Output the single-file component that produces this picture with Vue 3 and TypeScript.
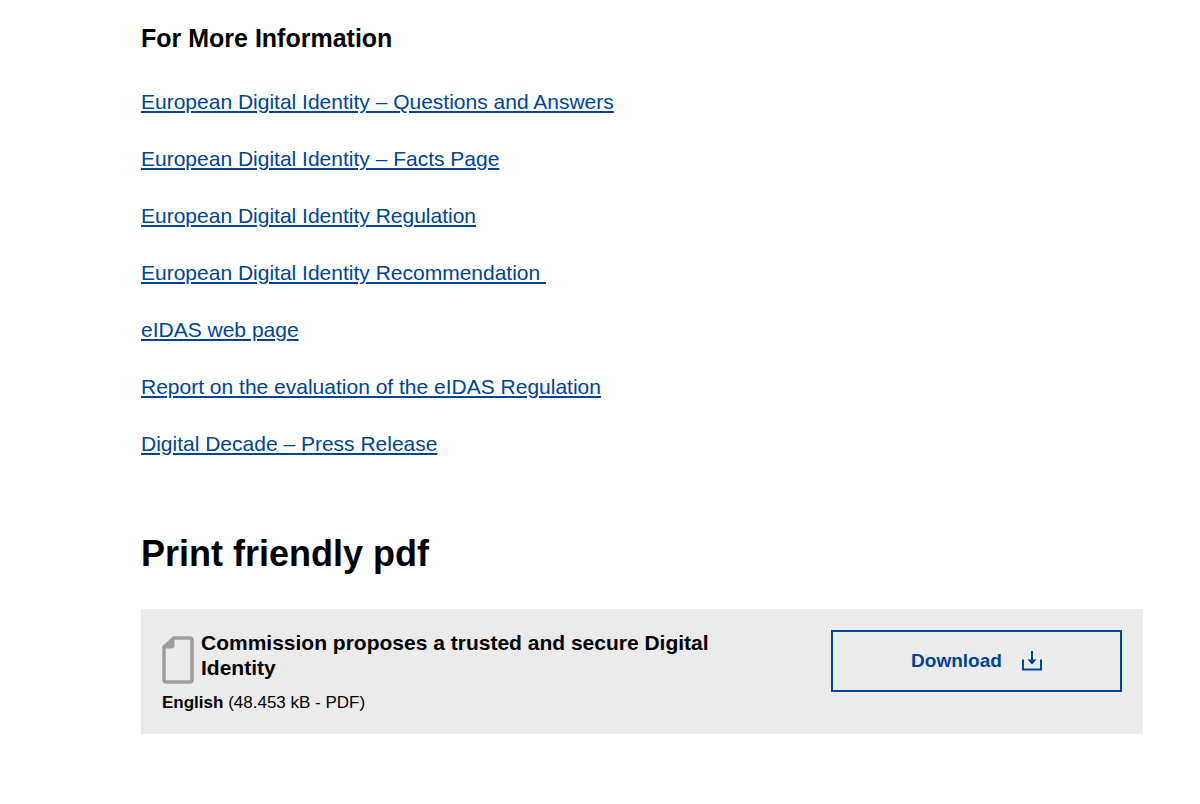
<script setup lang="ts">
interface InfoLink {
  label: string
}

const links: InfoLink[] = [
  { label: 'European Digital Identity – Questions and Answers' },
  { label: 'European Digital Identity – Facts Page' },
  { label: 'European Digital Identity Regulation' },
  { label: 'European Digital Identity Recommendation\u00a0' },
  { label: 'eIDAS web page' },
  { label: 'Report on the evaluation of the eIDAS Regulation' },
  { label: 'Digital Decade – Press Release' },
]
</script>

<template>
  <main class="page">
    <section>
      <h3 class="info-title">For More Information</h3>
      <p v-for="link in links" :key="link.label" class="info-item">
        <a href="#" class="info-link">{{ link.label }}</a>
      </p>
    </section>

    <section class="print">
      <h2 class="print-title">Print friendly pdf</h2>
      <article class="file">
        <div class="file-details">
          <div class="file-heading">
            <svg class="file-icon" viewBox="0 0 32 48" aria-hidden="true">
              <path d="M12 2H27.5Q30 2 30 4.500V43.500Q30 46 27.500 46H4.500Q2 46 2 43.500V11Z" fill="none" stroke="#9d9d9d" stroke-width="3.500" />
              <path d="M10 2H12.500V9.500Q12.500 12.500 9.500 12.500H2V10Z" fill="#9d9d9d" />
            </svg>
            <h3 class="file-title">Commission proposes a trusted and secure Digital Identity</h3>
          </div>
          <p class="file-meta"><strong>English</strong> (48.453 kB - PDF)</p>
        </div>
        <a href="#" class="download">
          <span>Download</span>
          <svg class="download-icon" viewBox="0 0 20 20" aria-hidden="true">
            <path d="M1 8.500V18.500H19V8.500" fill="none" stroke="#004494" stroke-width="2" />
            <path d="M9 0H11V8.500H14.500L10 13.500L5.500 8.500H9Z" fill="#004494" />
          </svg>
        </a>
      </article>
    </section>
  </main>
</template>

<style>
body {
  background: #fff;
}
</style>

<style scoped>
.page {
  padding: 22px 57px 70px 141px;
  color: #000;
  font-family: "Liberation Sans", Arial, sans-serif;
}
.info-title {
  margin: 0 0 36px;
  font-size: 25px;
  line-height: 32px;
}
.info-item {
  margin: 0 0 33px;
  font-size: 21px;
  line-height: 24px;
}
.info-link {
  color: #004494;
  text-decoration: underline;
}
.print {
  margin-top: 74px;
}
.print-title {
  margin: 0 0 31px;
  font-size: 36px;
  line-height: 48px;
}
.file {
  display: flex;
  align-items: flex-start;
  justify-content: space-between;
  padding: 21px;
  background: #ebebeb;
}
.file-details {
  flex: 0 1 600px;
}
.file-heading {
  display: flex;
  align-items: flex-start;
  gap: 7px;
}
.file-icon {
  flex: none;
  width: 32px;
  height: 48px;
  margin-top: 6px;
}
.file-title {
  margin: 0;
  font-size: 21px;
  line-height: 25px;
}
.file-meta {
  margin: 8px 0 0;
  font-size: 17px;
  line-height: 21px;
}
.download {
  box-sizing: border-box;
  display: flex;
  flex: 0 0 291px;
  align-items: center;
  justify-content: center;
  gap: 20px;
  height: 62px;
  border: 2px solid #004494;
  color: #004494;
  font-size: 19px;
  font-weight: bold;
  text-decoration: none;
}
.download-icon {
  width: 20px;
  height: 20px;
}
</style>
